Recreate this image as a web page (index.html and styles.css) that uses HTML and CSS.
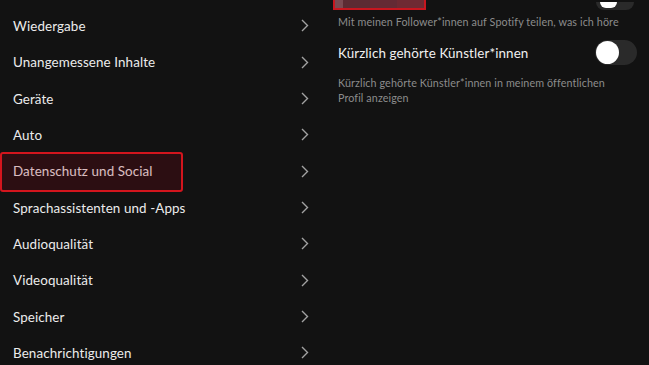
FILE: index.html
```html
<!DOCTYPE html>
<html lang="de">
<head>
<meta charset="utf-8">
<link rel="stylesheet" href="styles.css">
</head>
<body>
<div class="page">
  <div class="menu">
    <div class="row"><span>Wiedergabe</span><svg class="chev" viewBox="0 0 8 13"><path d="M1 1l5.5 5.5L1 12"/></svg></div>
    <div class="row"><span>Unangemessene Inhalte</span><svg class="chev" viewBox="0 0 8 13"><path d="M1 1l5.5 5.5L1 12"/></svg></div>
    <div class="row"><span>Geräte</span><svg class="chev" viewBox="0 0 8 13"><path d="M1 1l5.5 5.5L1 12"/></svg></div>
    <div class="row"><span>Auto</span><svg class="chev" viewBox="0 0 8 13"><path d="M1 1l5.5 5.5L1 12"/></svg></div>
    <div class="row active"><span>Datenschutz und Social</span><svg class="chev" viewBox="0 0 8 13"><path d="M1 1l5.5 5.5L1 12"/></svg><div class="mark"></div></div>
    <div class="row"><span>Sprachassistenten und -Apps</span><svg class="chev" viewBox="0 0 8 13"><path d="M1 1l5.5 5.5L1 12"/></svg></div>
    <div class="row"><span>Audioqualität</span><svg class="chev" viewBox="0 0 8 13"><path d="M1 1l5.5 5.5L1 12"/></svg></div>
    <div class="row"><span>Videoqualität</span><svg class="chev" viewBox="0 0 8 13"><path d="M1 1l5.5 5.5L1 12"/></svg></div>
    <div class="row"><span>Speicher</span><svg class="chev" viewBox="0 0 8 13"><path d="M1 1l5.5 5.5L1 12"/></svg></div>
    <div class="row"><span>Benachrichtigungen</span><svg class="chev" viewBox="0 0 8 13"><path d="M1 1l5.5 5.5L1 12"/></svg></div>
  </div>
  <div class="detail">
    <div class="topbar">
      <div class="censor"><i></i><i></i><i></i><i></i></div>
      <div class="toggle top"><div class="knob"></div></div>
    </div>
    <p class="desc first">Mit meinen Follower*innen auf Spotify teilen, was ich höre</p>
    <div class="setting">
      <span class="label">Kürzlich gehörte Künstler*innen</span>
      <div class="toggle"><div class="knob"></div></div>
    </div>
    <p class="desc last">Kürzlich gehörte Künstler*innen in meinem öffentlichen<br>Profil anzeigen</p>
  </div>
</div>
</body>
</html>
```

FILE: styles.css
```css
* { box-sizing: border-box; }
html, body {
  margin: 0;
  background: #121212;
  width: 649px;
  height: 365px;
  overflow: hidden;
  font-family: "Lato", "Open Sans", sans-serif;
}
.page {
  display: flex;
  width: 649px;
  height: 365px;
}
.menu {
  width: 325px;
  padding-top: 7.8px;
  display: flex;
  flex-direction: column;
}
.row {
  position: relative;
  flex: 0 0 36.33px;
  height: 36.33px;
  display: flex;
  align-items: center;
  justify-content: space-between;
  padding: 0 16px 0 13px;
  color: #ececec;
  font-size: 13.4px;
  letter-spacing: 0.1px;
}
.chev {
  width: 8px;
  height: 13px;
  fill: none;
  stroke: #a2a2a2;
  stroke-width: 1.4;
}
.mark {
  position: absolute;
  left: 0;
  top: -1.5px;
  width: 183px;
  height: 40px;
  border: 2px solid #d3151d;
  border-radius: 3px;
  background: rgba(150, 0, 20, 0.2);
}
.detail {
  flex: 1;
  padding: 0 13px 0 13px;
  display: flex;
  flex-direction: column;
}
.topbar {
  flex: 0 0 10px;
  height: 10px;
  display: flex;
  justify-content: space-between;
  align-items: flex-end;
}
.censor {
  margin-left: -5px;
  width: 93px;
  height: 10px;
  border: 2px solid #c8161f;
  border-top: none;
  display: flex;
  background: #5e2a31;
}
.censor i { flex: 1; }
.censor i:nth-child(1) { background: #7a4a52; flex: 0.3; }
.censor i:nth-child(2) { background: #5c2b33; }
.censor i:nth-child(3) { background: #642a34; }
.censor i:nth-child(4) { background: #6e2a33; }
.desc {
  margin: 0;
  color: #8c8c8c;
  font-size: 10.75px;
  line-height: 15px;
  letter-spacing: 0.1px;
}
.desc.first {
  margin-top: 4px;
}
.setting {
  margin-top: 11px;
  flex: 0 0 26px;
  height: 26px;
  display: flex;
  align-items: center;
  justify-content: space-between;
}
.label {
  color: #f0f0f0;
  font-size: 13.4px;
  letter-spacing: 0.1px;
}
.toggle {
  width: 42px;
  height: 25px;
  border-radius: 13px;
  background: #2a2a2a;
  display: flex;
  align-items: center;
  padding-left: 1px;
  margin-right: -1px;
  margin-top: -2px;
}
.knob {
  width: 23px;
  height: 23px;
  border-radius: 50%;
  background: #ffffff;
}
.toggle.top {
  margin-top: 0;
  height: 8px;
  width: 38px;
  margin-right: 2px;
  border-radius: 0 0 13px 13px;
  align-items: flex-end;
  padding-left: 4px;
  overflow: hidden;
}
.toggle.top .knob {
  width: 17px;
  height: 6px;
  border-radius: 0 0 9px 9px;
  margin-bottom: 2px;
}
.desc.last {
  margin-top: 9px;
}
```
